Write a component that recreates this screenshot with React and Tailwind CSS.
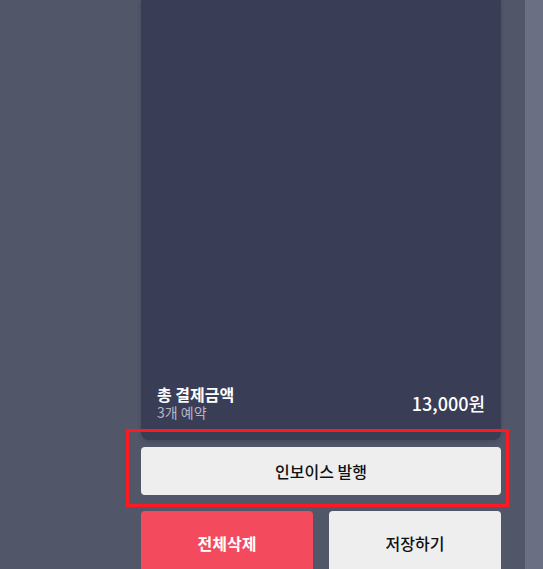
export default function App() {
  return (
    <div
      className="relative flex h-[569px] w-[543px] overflow-hidden bg-[#525669]"
      style={{ fontFamily: '"Noto Sans CJK KR", "Noto Sans", sans-serif' }}
    >
      <div className="w-[141px] shrink-0" />
      <div className="flex w-[360px] shrink-0 flex-col">
        <div className="flex h-[440px] shrink-0 flex-col justify-end rounded-b-lg bg-[#3a3d56] px-4 pb-[21px] shadow-[0_2px_4px_rgba(0,0,0,0.15)]">
          <div className="flex items-center justify-between">
            <div className="flex flex-col gap-[3px]">
              <span className="text-[16px] font-bold leading-[16px] text-white">총 결제금액</span>
              <span className="text-[14px] leading-[14px] text-[#b4b7c6]">3개 예약</span>
            </div>
            <span className="text-[18px] font-medium leading-[22px] text-white">13,000원</span>
          </div>
        </div>
        <button className="mt-[7px] flex h-12 shrink-0 items-center justify-center rounded bg-[#eeeeee] text-[16px] font-medium text-[#111]">
          인보이스 발행
        </button>
        <div className="mt-4 flex shrink-0 gap-4">
          <button className="flex h-16 flex-1 items-center justify-center rounded bg-[#f34b5d] text-[16px] font-bold text-white">
            전체삭제
          </button>
          <button className="flex h-16 flex-1 items-center justify-center rounded bg-[#eeeeee] text-[16px] font-medium text-[#111]">
            저장하기
          </button>
        </div>
      </div>
      <div className="ml-6 flex-1 bg-[#6b6f84]" />
      <div className="pointer-events-none absolute left-[126px] top-[429px] h-[78px] w-[383px] border-[3px] border-[#ff1a22]" />
    </div>
  );
}
